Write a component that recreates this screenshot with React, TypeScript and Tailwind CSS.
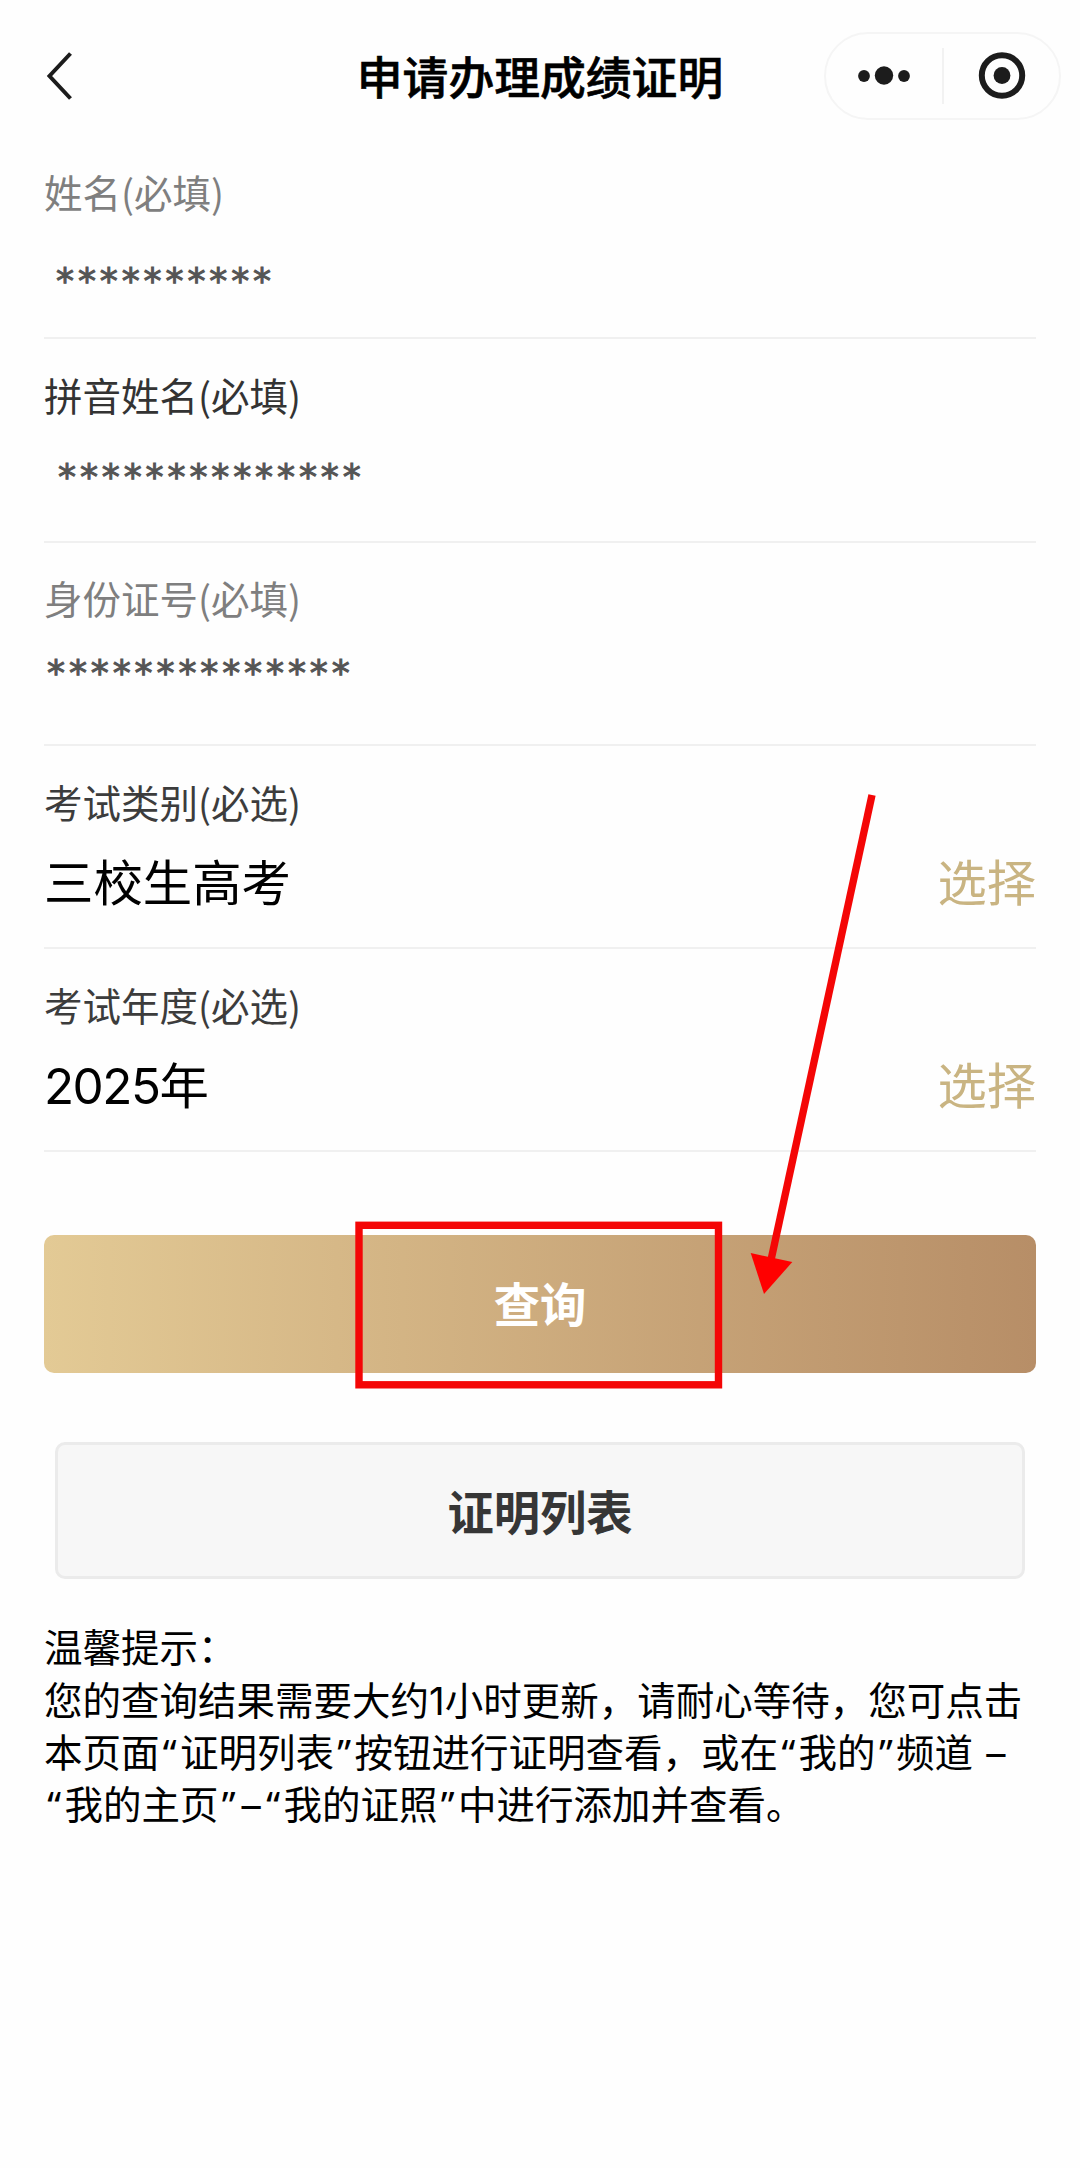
import clsx from 'clsx'

type Field = {
  label: string
  value: string
  masked?: boolean
  labelClass: string
  rowClass?: string
  valueClass?: string
}

const FIELDS: Field[] = [
  {
    label: '姓名(必填)',
    value: '**********',
    masked: true,
    labelClass: 'text-[#7f7f7f]',
    rowClass: 'pl-[12px] pt-[17px]',
  },
  {
    label: '拼音姓名(必填)',
    value: '**************',
    masked: true,
    labelClass: 'text-[#333333]',
    rowClass: 'pl-[14px] pt-[4px]',
  },
  {
    label: '身份证号(必填)',
    value: '**************',
    masked: true,
    labelClass: 'text-[#7f7f7f]',
    rowClass: 'pl-[3px] pb-[12px]',
  },
  {
    label: '考试类别(必选)',
    value: '三校生高考',
    labelClass: 'text-[#3c3c3c]',
    rowClass: 'pt-[3px]',
  },
  {
    label: '考试年度(必选)',
    value: '2025年',
    labelClass: 'text-[#3c3c3c]',
    rowClass: 'pt-[4px]',
    valueClass: 'tracking-[-1.5px]',
  },
]

function Header() {
  return (
    <header className="flex h-[136px] items-center pt-4 pr-[19px] pl-[46px]">
      <button type="button" aria-label="返回" className="w-[210px] flex-none">
        <svg width="28" height="50" viewBox="0 0 28 50" fill="none" className="block">
          <path d="M24.5 2.5 3.5 25l21 22.5" stroke="#1c1c1c" strokeWidth="4" />
        </svg>
      </button>
      <h1 className="flex-1 pt-[5px] text-center text-[45.8px] leading-[60px] font-medium whitespace-nowrap text-black [-webkit-text-stroke:0.6px]">
        申请办理成绩证明
      </h1>
      <div className="flex h-[88px] w-[237px] flex-none items-center rounded-full border-2 border-[#f5f5f5]">
        <svg width="116" height="56" viewBox="0 0 116 56" fill="#1c1c1c">
          <circle cx="38" cy="28" r="5.9" />
          <circle cx="58" cy="27.5" r="9.2" />
          <circle cx="78" cy="28" r="5.9" />
        </svg>
        <div className="h-14 w-[2px] bg-[#f2f2f2]" />
        <svg width="115" height="56" viewBox="0 0 115 56">
          <circle cx="58" cy="27.5" r="20.2" fill="none" stroke="#1c1c1c" strokeWidth="6" />
          <circle cx="58" cy="27.5" r="8.4" fill="#1c1c1c" />
        </svg>
      </div>
    </header>
  )
}

function FieldRow({ field }: { field: Field }) {
  return (
    <div className="h-[203.25px] border-b-2 border-[#f0f0f0] pt-[30px]">
      <div
        className={clsx(
          "flex h-14 items-center pb-[6px] font-['Noto_Sans_CJK_SC',sans-serif] text-[38.5px] leading-none",
          field.labelClass,
        )}
      >
        {field.label}
      </div>
      <div className={clsx('flex h-[100px] items-center justify-between', field.rowClass)}>
        {field.masked ? (
          <span className="font-['DejaVu_Sans',sans-serif] text-[36px] leading-none tracking-[3.9px] text-[#555555] [-webkit-text-stroke:1px]">
            {field.value}
          </span>
        ) : (
          <>
            <span className={clsx('text-[49.4px] leading-none text-black', field.valueClass)}>{field.value}</span>
            <button type="button" className="text-[49.3px] leading-none text-[#c9b482]">
              选择
            </button>
          </>
        )}
      </div>
    </div>
  )
}

function Quoted({ children }: { children: string }) {
  return (
    <>
      <span className="inline-block w-[20.5px] text-center font-['Noto_Sans',sans-serif] leading-none">“</span>
      {children}
      <span className="inline-block w-[20.5px] text-center font-['Noto_Sans',sans-serif] leading-none">”</span>
    </>
  )
}

function Dash() {
  return <span className="inline-block w-[24px] text-center">–</span>
}

// Red marker box and arrow drawn over the page
function Annotation() {
  return (
    <svg width="1080" height="2168" viewBox="0 0 1080 2168" className="pointer-events-none absolute top-0 left-0">
      <rect x="359" y="1225.3" width="359.5" height="159.5" fill="none" stroke="#f40606" strokeWidth="7.4" />
      <path d="M872 795 771 1260" stroke="#f40606" strokeWidth="7.4" />
      <path d="M750.7 1253 792.3 1262 764 1294z" fill="#ff0000" />
    </svg>
  )
}

export default function App() {
  return (
    <div className="relative h-[2168px] w-[1080px] overflow-hidden bg-[#fefefe] font-[Inter,'Noto_Sans_CJK_SC',sans-serif]">
      <Header />
      <main className="px-11">
        {FIELDS.map((field) => (
          <FieldRow key={field.label} field={field} />
        ))}
        <button
          type="button"
          className="mt-[83px] flex h-[138px] w-full items-center justify-center rounded-[10px] bg-linear-to-r from-[#e3ca95] to-[#b78e67] pt-[3px] text-[46.3px] font-bold text-white"
        >
          查询
        </button>
        <div className="mt-[69px] px-[11px]">
          <button
            type="button"
            className="flex h-[137px] w-full items-center justify-center rounded-[10px] border-[3px] border-[#ebebeb] bg-[#f7f7f7] pt-[6px] text-[46.3px] font-bold text-[#363636]"
          >
            证明列表
          </button>
        </div>
        <div className="mt-[43px] text-[38.5px] leading-[52.3px] whitespace-nowrap text-black">
          <p>温馨提示：</p>
          <p>您的查询结果需要大约1小时更新，请耐心等待，您可点击</p>
          <p>
            本页面<Quoted>证明列表</Quoted>按钮进行证明查看，或在<Quoted>我的</Quoted>频道 <Dash />
          </p>
          <p>
            <Quoted>我的主页</Quoted>
            <Dash />
            <Quoted>我的证照</Quoted>中进行添加并查看。
          </p>
        </div>
      </main>
      <Annotation />
    </div>
  )
}
